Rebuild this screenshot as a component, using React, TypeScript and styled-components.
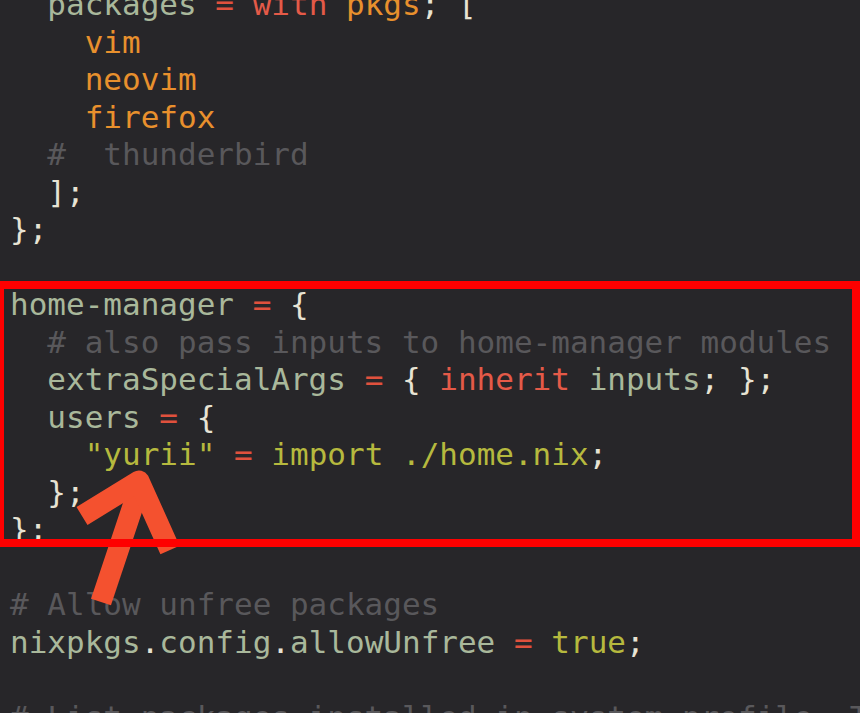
import React from "react";
import styled, { createGlobalStyle } from "styled-components";

const Global = createGlobalStyle`
  html, body {
    margin: 0;
    padding: 0;
    background: #272629;
  }
  #root {
    width: 860px;
    height: 713px;
  }
`;

const Editor = styled.div`
  position: relative;
  width: 860px;
  height: 713px;
  overflow: hidden;
  background: #272629;
`;

const Code = styled.div`
  margin-top: -14px;
  padding-left: 10px;
  display: flex;
  flex-direction: column;
  font-family: "DejaVu Sans Mono", "Liberation Mono", monospace;
  font-size: 31px;
  line-height: 37.5px;
  white-space: pre;
`;

const Line = styled.div`
  height: 37.5px;
`;

type Kind = "id" | "op" | "kw" | "pkg" | "cmt" | "str" | "punc";

const colors: Record<Kind, string> = {
  id: "#a9b89b",
  op: "#e0513d",
  kw: "#e45a48",
  pkg: "#e8902d",
  cmt: "#59585b",
  str: "#b6b93e",
  punc: "#e7e3d4",
};

const Tok = styled.span<{ $k: Kind }>`
  color: ${(p) => colors[p.$k]};
`;

const Box = styled.div`
  position: absolute;
  left: -4px;
  top: 281px;
  width: 864px;
  height: 266px;
  box-sizing: border-box;
  border: 8px solid #fe0000;
  pointer-events: none;
`;

const Arrow = styled.svg`
  position: absolute;
  left: 0;
  top: 0;
  pointer-events: none;
`;

type T = [Kind, string];
const lines: T[][] = [
  [["punc", "  "], ["id", "packages"], ["punc", " "], ["op", "="], ["punc", " "], ["kw", "with"], ["punc", " "], ["pkg", "pkgs"], ["punc", "; ["]],
  [["punc", "    "], ["pkg", "vim"]],
  [["punc", "    "], ["pkg", "neovim"]],
  [["punc", "    "], ["pkg", "firefox"]],
  [["punc", "  "], ["cmt", "#  thunderbird"]],
  [["punc", "  ];"]],
  [["punc", "};"]],
  [],
  [["id", "home-manager"], ["punc", " "], ["op", "="], ["punc", " {"]],
  [["punc", "  "], ["cmt", "# also pass inputs to home-manager modules"]],
  [["punc", "  "], ["id", "extraSpecialArgs"], ["punc", " "], ["op", "="], ["punc", " { "], ["kw", "inherit"], ["punc", " "], ["id", "inputs"], ["punc", "; };"]],
  [["punc", "  "], ["id", "users"], ["punc", " "], ["op", "="], ["punc", " {"]],
  [["punc", "    "], ["str", "\"yurii\""], ["punc", " "], ["op", "="], ["punc", " "], ["str", "import ./home.nix"], ["punc", ";"]],
  [["punc", "  };"]],
  [["punc", "};"]],
  [],
  [["cmt", "# Allow unfree packages"]],
  [["id", "nixpkgs"], ["punc", "."], ["id", "config"], ["punc", "."], ["id", "allowUnfree"], ["punc", " "], ["op", "="], ["punc", " "], ["str", "true"], ["punc", ";"]],
  [],
  [["cmt", "# List packages installed in system profile. To search, run:"]],
];

export default function App() {
  return (
    <Editor>
      <Global />
      <Code>
        {lines.map((l, i) => (
          <Line key={i}>
            {l.length === 0 ? " " : l.map(([k, t], j) => (
              <Tok key={j} $k={k}>{t}</Tok>
            ))}
          </Line>
        ))}
      </Code>
      <Arrow width="860" height="713" viewBox="0 0 860 713">
        <g stroke="#f4512f" strokeWidth="21" fill="none">
          <line x1="101" y1="602" x2="139" y2="488" strokeLinecap="butt" />
          <polyline points="82,516 139,481 170,550" strokeLinejoin="round" strokeLinecap="butt" />
        </g>
      </Arrow>
      <Box />
    </Editor>
  );
}
